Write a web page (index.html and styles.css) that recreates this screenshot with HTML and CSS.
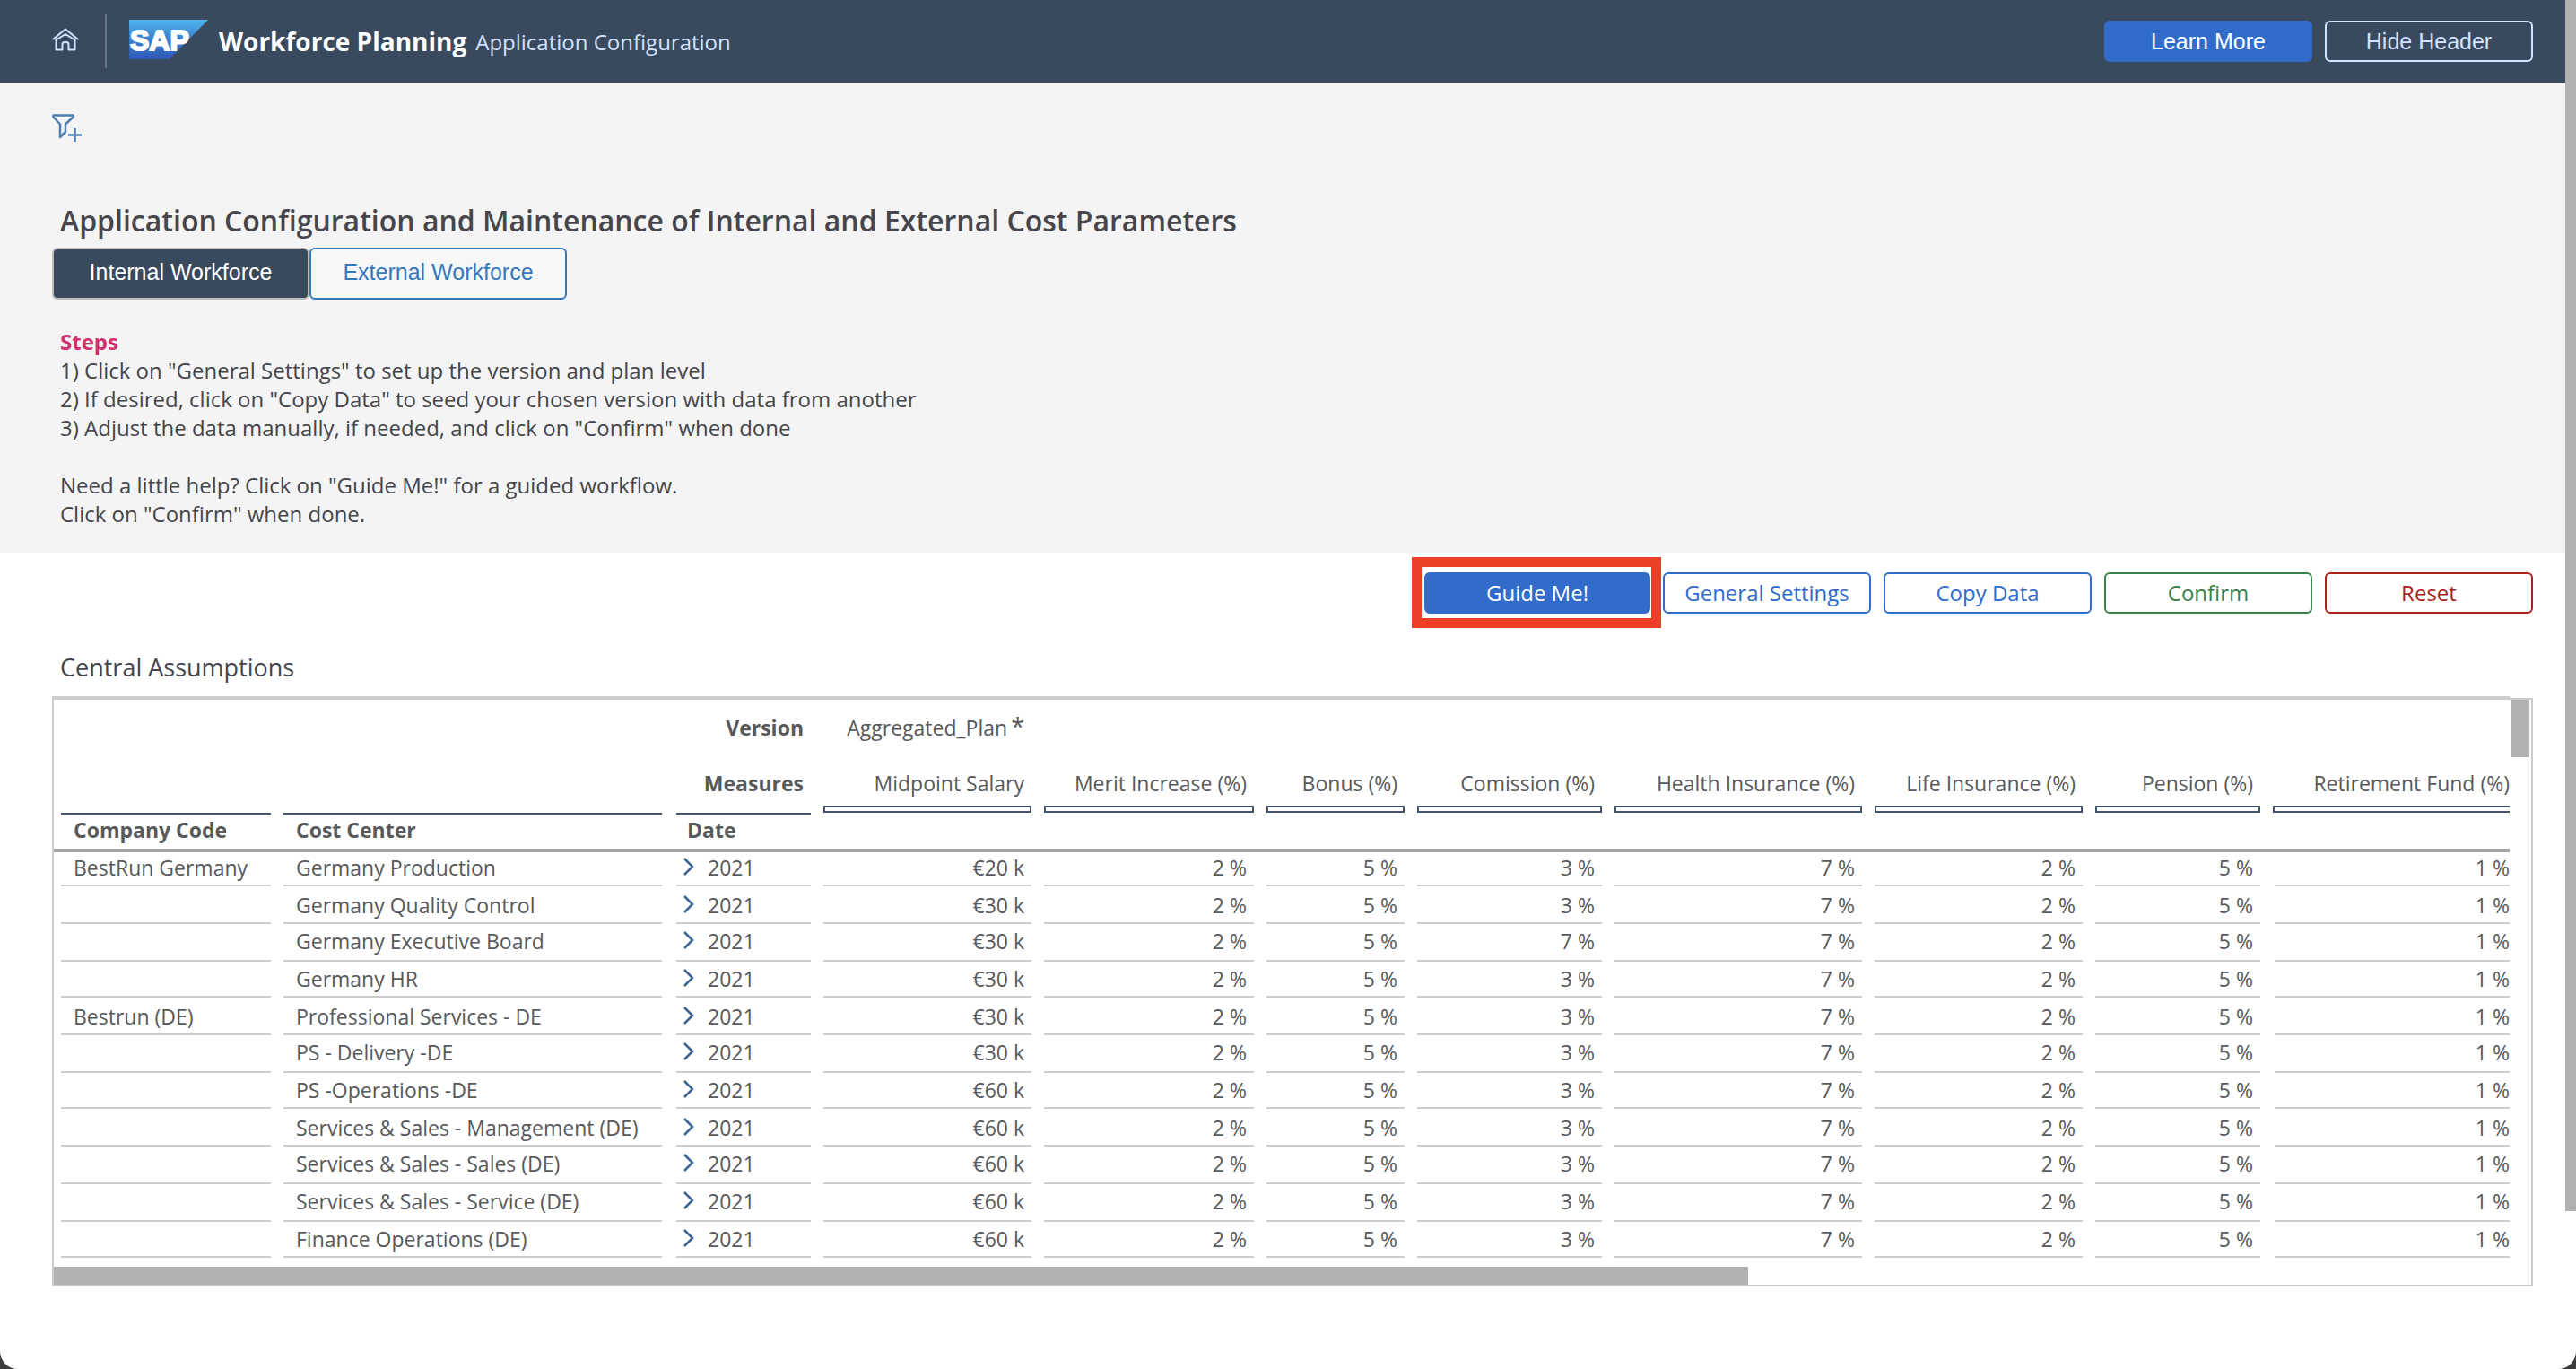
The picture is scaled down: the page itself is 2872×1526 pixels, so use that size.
FILE: index.html
```html
<!DOCTYPE html>
<html lang="en">
<head>
<meta charset="utf-8">
<title>Workforce Planning - Application Configuration</title>
<link rel="stylesheet" href="styles.css">
</head>
<body>
<div class="window">
  <div class="page">
    <header class="topbar">
      <a class="home" href="#" aria-label="Home">
        <svg width="30" height="26" viewBox="0 0 30 26" fill="none" stroke="currentColor" stroke-width="2" stroke-linejoin="round" stroke-linecap="round"><path d="M1.500 12.500 15 1.500 28.500 12.500"/><path d="M4.500 13.500V24.500H11.500V18.500Q11.500 16 14 16H16Q18.500 16 18.500 18.500V24.500H25.500V13.500L15 7Z"/></svg>
      </a>
      <svg class="logo" width="88" height="44" viewBox="0 0 88 44" role="img" aria-label="SAP">
        <defs><linearGradient id="logo-fill" x1="0" y1="0" x2="0" y2="1"><stop offset="0" stop-color="#50b6ec"/><stop offset="0.450" stop-color="#3c84d2"/><stop offset="1" stop-color="#2f58b4"/></linearGradient></defs>
        <path d="M0 0H88L45 44H0Z" fill="url(#logo-fill)"/>
        <text class="logo-text" x="1" y="34">SAP</text>
      </svg>
      <h1 class="product">Workforce Planning</h1>
      <span class="section">Application Configuration</span>
      <div class="topbar-actions">
        <button class="btn btn-primary btn-arial" type="button">Learn More</button>
        <button class="btn btn-ghost btn-arial" type="button">Hide Header</button>
      </div>
    </header>

    <section class="intro">
      <button class="filter" type="button" aria-label="Add filter">
        <svg width="34" height="32" viewBox="0 0 34 32" fill="none" stroke="currentColor" stroke-width="2.500" stroke-linejoin="round"><path d="M1.500 1.500H23.500V3.500L15 11.500V20L9 26V11.500L1.500 3.500Z"/><path d="M18 23.500H33M25.500 16V31"/></svg>
      </button>
      <h2 class="title">Application Configuration and Maintenance of Internal and External Cost Parameters</h2>
      <div class="toggle">
        <button class="toggle-item selected" type="button">Internal Workforce</button>
        <button class="toggle-item" type="button">External Workforce</button>
      </div>
      <div class="steps">
        <h3>Steps</h3>
        <p>1) Click on "General Settings" to set up the version and plan level</p>
        <p>2) If desired, click on "Copy Data" to seed your chosen version with data from another</p>
        <p>3) Adjust the data manually, if needed, and click on "Confirm" when done</p>
        <p class="help">Need a little help? Click on "Guide Me!" for a guided workflow.</p>
        <p>Click on "Confirm" when done.</p>
      </div>
    </section>

    <main class="content">
      <div class="actions">
        <div class="callout"><button class="btn btn-primary btn-wide" type="button">Guide Me!</button></div>
        <button class="btn btn-blue" type="button">General Settings</button>
        <button class="btn btn-blue" type="button">Copy Data</button>
        <button class="btn btn-green" type="button">Confirm</button>
        <button class="btn btn-red" type="button">Reset</button>
      </div>

      <h2 class="table-title" id="table-title">Central Assumptions</h2>
      <div class="panel-cap"></div>
      <div class="panel">
        <div class="viewport">
          <table class="grid" aria-labelledby="table-title">
            <colgroup><col class="c-code"><col class="c-center"><col class="c-date"><col class="c-salary"><col class="c-merit"><col class="c-bonus"><col class="c-comm"><col class="c-health"><col class="c-life"><col class="c-pension"><col class="c-retire"></colgroup>
            <thead>
              <tr class="r-version"><td></td><td></td><th>Version</th><td>Aggregated_Plan<span class="star">*</span></td><td colspan="7"></td></tr>
              <tr class="r-measures"><td></td><td></td><th>Measures</th><td>Midpoint Salary<i class="bar"></i></td><td>Merit Increase (%)<i class="bar"></i></td><td>Bonus (%)<i class="bar"></i></td><td>Comission (%)<i class="bar"></i></td><td>Health Insurance (%)<i class="bar"></i></td><td>Life Insurance (%)<i class="bar"></i></td><td>Pension (%)<i class="bar"></i></td><td>Retirement Fund (%)<i class="bar bar-open"></i></td></tr>
              <tr class="r-dims"><th>Company Code</th><th>Cost Center</th><th>Date</th><td></td><td></td><td></td><td></td><td></td><td></td><td></td><td></td></tr>
            </thead>
            <tbody id="rows"></tbody>
          </table>
        </div>
        <div class="vscroll"><div class="vthumb"></div></div>
        <div class="hscroll"><div class="hthumb"></div></div>
      </div>
    </main>
  </div>
  <div class="page-scroll"><div class="page-thumb"></div></div>
</div>
<script src="table.js"></script>
</body>
</html>
```
FILE: styles.css
```css
* { box-sizing: border-box; }

body {
  margin: 0;
  background: #3c3c3c;
  color: #45454b;
  font: 24px/32px "Open Sans", "Noto Sans", sans-serif;
}

h1, h2, h3, p { margin: 0; }
button { font: inherit; cursor: pointer; }

.window {
  display: flex;
  min-height: 100vh;
  background: #fff;
  border-radius: 0 0 20px 20px;
  overflow: hidden;
}
.page { flex: 1; min-width: 0; }
.page-scroll { width: 12px; }
.page-thumb { height: 1350px; max-height: 90vh; background: #b1b1b1; }

/* Top bar */
.topbar {
  display: flex;
  align-items: center;
  height: 92px;
  padding: 0 36px 0 58px;
  background: #39495e;
  color: #d3e2ff;
}
.home {
  display: flex;
  align-items: center;
  height: 60px;
  padding: 0 29px 4px 0;
  border-right: 2px solid #6d7788;
  color: #d3e2ff;
}
.logo { margin: 0 12px 4px 25px; }
.logo-text {
  font: 900 32px "Liberation Sans", sans-serif;
  fill: #fff;
  stroke: #fff;
  stroke-width: 2;
}
.product { font-size: 28px; font-weight: 700; color: #fff; }
.section { margin-left: 10px; padding-top: 2px; }
.topbar-actions { display: flex; gap: 14px; margin-left: auto; }

/* Buttons */
.btn {
  width: 232px;
  height: 46px;
  padding: 0;
  border: 2px solid currentColor;
  border-radius: 6px;
  background: transparent;
}
.btn-primary { background: #316ccb; border-color: #316ccb; color: #fff; }
.btn-ghost { color: #d3e2ff; }
.btn-blue { color: #316ccb; }
.btn-green { color: #3a8049; }
.btn-red { color: #ab2117; }
.btn-wide { width: 252px; }
.btn-arial, .toggle-item { font-family: "Liberation Sans", Arial, sans-serif; font-size: 25px; }

/* Introduction */
.intro { padding: 35px 36px 27px 58px; background: #f4f4f4; }
.filter {
  display: block;
  height: 32px;
  padding: 0;
  border: 0;
  background: none;
  color: #4f7fb0;
}
.title {
  margin-top: 67px;
  padding-left: 9px;
  font-size: 32px;
  font-weight: 600;
  line-height: 40px;
}
.toggle { display: flex; margin-top: 10px; }
.toggle-item {
  width: 287px;
  height: 58px;
  padding: 0 0 4px;
  border: 2px solid #3478bc;
  border-radius: 6px;
  background: #f7f7f7;
  color: #3478bc;
}
.toggle-item.selected { border-color: #bdbdbd; background: #39495e; color: #fff; }
.steps { margin-top: 31px; padding-left: 9px; }
.steps h3 { font-size: 24px; font-weight: 700; color: #d0316f; }
.steps .help { margin-top: 32px; }

/* Table area */
.content { padding: 22px 36px 0 58px; }
.actions { display: flex; justify-content: flex-end; gap: 14px; }
.callout { position: relative; display: flex; }
.callout::after {
  content: "";
  position: absolute;
  inset: -17px -12px -16px -14px;
  border: 11px solid #eb4026;
  pointer-events: none;
}
.table-title {
  margin: 42px 0 14px;
  padding-left: 9px;
  font-size: 27px;
  font-weight: 400;
  line-height: 36px;
}
.panel-cap { height: 2px; margin-right: 26px; background: #ccc; }
.panel {
  display: grid;
  grid-template-columns: minmax(0, 1fr) 24px;
  border: 2px solid #ccc;
}
.viewport { overflow: hidden; }
.vscroll { padding: 0 2px; }
.vthumb { height: 64px; background: #b1b1b1; }
.hscroll { grid-column: 1 / -1; padding-top: 10px; }
.hthumb { width: 68.4%; height: 20px; background: #b1b1b1; }

.grid {
  width: 100%;
  table-layout: fixed;
  border-collapse: separate;
  border-spacing: 0;
  color: #58595b;
  font-size: 23px;
  line-height: 30px;
}
.c-code { width: 242px; }
.c-center { width: 436px; }
.c-date { width: 166px; }
.c-salary { width: 246px; }
.c-merit { width: 248px; }
.c-bonus { width: 168px; }
.c-comm { width: 220px; }
.c-health { width: 290px; }
.c-life { width: 246px; }
.c-pension { width: 198px; }
.c-retire { width: 278px; }

.grid th, .grid td {
  --gap: 14px;
  padding: 4px 8px 0 28px;
  text-align: right;
  vertical-align: top;
  white-space: nowrap;
  font-weight: 400;
}
.grid th { font-weight: 700; }
.grid tr > :first-child { --gap: 8px; padding-left: 22px; }
.grid tr > :last-child { --gap: 16px; padding-right: 0; }
.grid .r-version > *, .grid .r-measures > * { padding-top: 16px; padding-left: 14px; }
.r-version { height: 62px; }
.r-measures { height: 64px; }
.r-dims { height: 44px; }
.grid .r-dims > * { border-bottom: 4px solid #a5a5a7; }
.grid .r-dims th {
  text-align: left;
  background: linear-gradient(#44546a, #44546a) right top / calc(100% - var(--gap)) 2px no-repeat;
}
.star { padding-left: 4px; font-size: 27px; line-height: 20px; }
.bar {
  display: block;
  height: 8px;
  margin: 10px -8px 0 0;
  border: 2px solid #44546a;
}
.bar-open { margin-right: 0; border-right: 0; }

.grid tbody tr { height: 42px; }
.grid tbody tr:nth-child(1) { height: 38px; }
.grid tbody tr:nth-child(4),
.grid tbody tr:nth-child(7),
.grid tbody tr:nth-child(11) { height: 40px; }
.grid tbody tr:nth-child(1) td { padding-top: 2px; }
.grid tbody tr:nth-child(3n+2) td { padding-top: 6px; }
.grid tbody tr:last-child td { padding-top: 4px; }
.grid tbody td { background: linear-gradient(#ccc, #ccc) right bottom / calc(100% - var(--gap)) 2px no-repeat; }
.grid tbody td:nth-child(-n+3) { text-align: left; }
.grid tbody td:nth-child(3) { padding-left: 24px; }
.grid th:nth-child(3), .grid td:nth-child(3) { --gap: 16px; }
.expander {
  display: inline-flex;
  width: 27px;
  height: 20px;
  padding: 0;
  border: 0;
  background: none;
  color: #3b6391;
}
```
FILE: table.js
```js
const rows = [
  ['BestRun Germany', 'Germany Production', '€20 k', 3],
  ['', 'Germany Quality Control', '€30 k', 3],
  ['', 'Germany Executive Board', '€30 k', 7],
  ['', 'Germany HR', '€30 k', 3],
  ['Bestrun (DE)', 'Professional Services - DE', '€30 k', 3],
  ['', 'PS - Delivery -DE', '€30 k', 3],
  ['', 'PS -Operations -DE', '€60 k', 3],
  ['', 'Services & Sales - Management (DE)', '€60 k', 3],
  ['', 'Services & Sales - Sales (DE)', '€60 k', 3],
  ['', 'Services & Sales - Service (DE)', '€60 k', 3],
  ['', 'Finance Operations (DE)', '€60 k', 3]
];

const chevron = '<button class="expander" type="button" aria-label="Expand 2021">' +
  '<svg width="12" height="20" viewBox="0 0 12 20" fill="none" stroke="currentColor" stroke-width="2.500">' +
  '<path d="M1 1 10 10 1 19"/></svg></button>';

const body = document.getElementById('rows');
for (const [company, center, salary, commission] of rows) {
  const tr = body.insertRow();
  const percents = [2, 5, commission, 7, 2, 5, 1].map(n => n + ' %');
  for (const text of [company, center, '2021', salary, ...percents]) {
    tr.insertCell().textContent = text;
  }
  tr.cells[2].insertAdjacentHTML('afterbegin', chevron);
}
```
